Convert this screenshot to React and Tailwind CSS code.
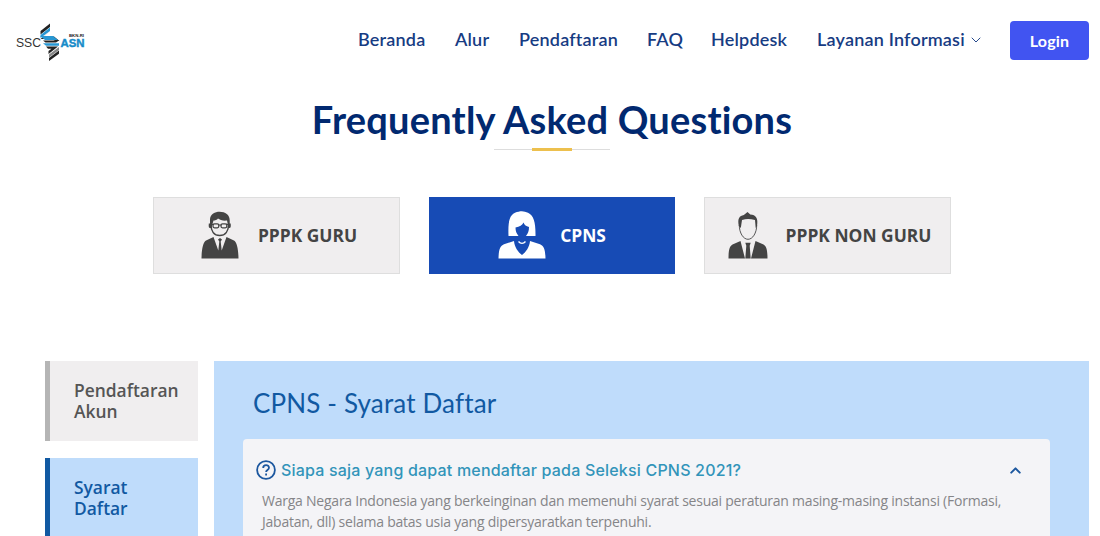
import { ChevronDown, ChevronUp } from 'lucide-react'

const NAV_ITEMS = [
  { label: 'Beranda', className: 'w-[97px]' },
  { label: 'Alur', className: 'w-16' },
  { label: 'Pendaftaran', className: 'w-32' },
  { label: 'FAQ', className: 'w-16' },
  { label: 'Helpdesk', className: 'w-[106px]' },
]

const CATEGORIES = [
  { id: 'guru', label: 'PPPK GURU', icon: TeacherIcon, spacing: 'gap-[19px] pl-[5px]' },
  { id: 'cpns', label: 'CPNS', icon: WomanIcon, spacing: 'gap-[14px]' },
  { id: 'non-guru', label: 'PPPK NON GURU', icon: ManIcon, spacing: 'gap-[18px] pl-[4px]' },
]

function Logo() {
  return (
    <svg width="72" height="42" viewBox="0 0 72 42" aria-label="SSCASN BKN-RI">
      <text x="0" y="26.500" fontSize="12.500" textLength="25" lengthAdjust="spacingAndGlyphs" fill="#333" fontFamily="Liberation Sans, sans-serif">SSC</text>
      <path d="M34 3.500 24.500 11v3.500L34 7z" fill="#222" />
      <path d="M34 7.500 24.500 15v3L34 11z" fill="#2797d3" />
      <path d="M34 11.500 27.500 16.500H38L43.500 21H39l-3-2H24.500z" fill="#222" />
      <path d="M24 16h13l5 4H29z" fill="#2797d3" />
      <path d="M27 20.500h16l-3 2H29.500z" fill="#222" />
      <path d="M27 23.300h16v2.500H30z" fill="#2797d3" />
      <path d="M30 26.600h12L32.500 34v-3l3-2.300H32z" fill="#222" />
      <path d="M43 27v3L33 37.500v-3z" fill="#888" />
      <path d="M43 30.500v3.300L33 41v-3z" fill="#222" />
      <text x="53" y="17.400" fontSize="4.200" textLength="15" lengthAdjust="spacingAndGlyphs" fontWeight="700" fill="#222" fontFamily="Liberation Sans, sans-serif">BKN-RI</text>
      <text x="44.500" y="26.500" fontSize="10.500" textLength="24" lengthAdjust="spacingAndGlyphs" fontWeight="700" fill="#168bc9" stroke="#168bc9" strokeWidth=".4" fontFamily="Liberation Sans, sans-serif">ASN</text>
    </svg>
  )
}

function TeacherIcon() {
  return (
    <svg width="38" height="48" viewBox="0 0 38 48" fill="#444">
      <path d="M9 15V8C9.500 3 14 .8 18.500.8c6 0 10 3 10.200 8.200v6h-1.500L26 9.500c-4 .5-7-.5-9-2-1 1.500-3 2-4.500 2L10.800 15z" />
      <path d="M10 14c0 6 3 10.500 8.700 10.500S27.500 20 27.500 14" fill="none" stroke="#444" strokeWidth="1.500" />
      <path d="M7.800 12.500h2.700v4.500H9c-1.200 0-1.500-1-1.200-4.500zM27 12.500h2.700c.3 3.500 0 4.500-1.200 4.500H27z" />
      <rect x="12" y="12.800" width="5.800" height="4" rx="1.500" fill="none" stroke="#444" strokeWidth="1.300" />
      <rect x="20" y="12.800" width="5.800" height="4" rx="1.500" fill="none" stroke="#444" strokeWidth="1.300" />
      <path d="M9.500 13.300h3M17.500 14h3M25 13.300h3" stroke="#444" strokeWidth="1.200" />
      <path d="M.5 47.500C.7 38 2 31.500 5 29.500L12.500 26l4.800 13.500 1-9-1.300-2 2-1.500 2 1.500-1.300 2 1 9L25.500 26l7.500 3.500c3 2 4.300 8.500 4.500 18z" />
    </svg>
  )
}

function WomanIcon() {
  return (
    <svg width="48" height="48" viewBox="0 0 48 48" fill="#fff">
      <path d="M10.500 25C10 12 11 4.500 17 1.800c5-2 9-2 13 0C36 4.500 37.700 12 37.500 25H28c2-2.500 3-5 3-9-3-.7-4.500-2-5.500-4.500-1 2.500-4 4.500-8 5 0 3.500 1 6 3 8.500z" />
      <path d="M.5 47.500C.8 38 2 35 6 33.200l10-3.200c.5 6 4 11 8 14 4-3 7.500-8 8-14l10 3.200c4 1.800 5.200 4.800 5.500 14.300z" />
      <path d="M20.500 30.500c2 2.500 5 2.500 7 0" fill="none" stroke="#fff" strokeWidth="1.300" />
    </svg>
  )
}

function ManIcon() {
  return (
    <svg width="40" height="48" viewBox="0 0 40 48" fill="#444">
      <path d="M10.800 15c-1.500-8 .7-10 5-11L19.500 1l2.800 2.500c5.500 0 8.200 4 6.700 11.500l-1.300 2-.7-8c-5-1.500-9-1.500-13 0l-1.200 8z" />
      <path d="M11.300 14c0 8 4 14.300 8.700 14.300S28.700 22 28.700 14" fill="none" stroke="#444" strokeWidth=".9" />
      <path d="M.5 47.500c.1-9 1-12 4-14L12.500 30l4.500 17.500zM39.500 47.500c-.1-9-1-12-4-14L27.500 30 23 47.500zM17.300 31.800h5.400l-1 3 1 12.700h-5.400l1-12.700z" />
    </svg>
  )
}

function QuestionIcon() {
  return (
    <svg width="20" height="20" viewBox="0 0 20 20" fill="none" stroke="#1c579f" strokeWidth="1.800">
      <circle cx="10" cy="10" r="8.900" />
      <path d="M7.200 8c0-3.900 5.800-3.700 5.800-.2 0 2.200-2.900 2.300-2.900 4.200M10.100 13.500v1.900" />
    </svg>
  )
}

function Header() {
  return (
    <header className="flex h-20 items-center pt-px pl-4">
      <div className="w-[342px] pt-px">
        <Logo />
      </div>
      <nav className="flex items-center pb-[3px] font-[Lato,sans-serif] text-[18px] font-semibold tracking-[0.2px] text-[#173c83]">
        {NAV_ITEMS.map((item) => (
          <a key={item.label} href="#" className={item.className}>
            {item.label}
          </a>
        ))}
        <a href="#" className="flex w-[193px] items-center gap-[3px] whitespace-nowrap">
          Layanan Informasi
          <ChevronDown size={16} strokeWidth={1.4} className="mt-px" />
        </a>
      </nav>
      <button type="button" className="h-[39px] w-[79px] rounded bg-[#4154f1] font-[Lato,sans-serif] text-[16px] font-bold tracking-[0.2px] text-white">
        Login
      </button>
    </header>
  )
}

function CategoryTabs({ active }) {
  return (
    <div className="mt-[46px] flex justify-center gap-[29px] pl-1">
      {CATEGORIES.map(({ id, label, icon: Icon, spacing }) => (
        <button
          key={id}
          type="button"
          className={`flex h-[77px] w-[246.500px] items-center justify-center border pb-px font-['Open_Sans',sans-serif] text-[17.400px] font-bold whitespace-nowrap ${spacing} ${
            id === active ? 'border-[#174bb5] bg-[#174bb5] text-white' : 'border-[#dedede] bg-[#f0eeef] text-[#444]'
          }`}
        >
          <Icon />
          {label}
        </button>
      ))}
    </div>
  )
}

export default function App() {
  return (
    <div className="h-[536px] w-[1100px] overflow-hidden bg-white">
      <Header />
      <h1 className="mt-[15px] pl-1 text-center font-[Lato,sans-serif] text-[38px] leading-[48px] font-bold tracking-[0.200px] text-[#012970]">
        Frequently Asked Questions
      </h1>
      <div className="mt-[5px] flex h-[3px] items-center justify-center pl-1">
        <span className="h-px w-[38px] bg-[#ddd]" />
        <span className="h-[3px] w-10 bg-[#edc04e]" />
        <span className="h-px w-[38px] bg-[#ddd]" />
      </div>
      <CategoryTabs active="cpns" />

      <main className="mt-[87px] flex gap-4 pl-[45px]">
        <aside className="flex w-[153px] shrink-0 flex-col gap-[17px] font-['Open_Sans',sans-serif] text-[17.400px] leading-[20.500px] font-semibold">
          <a href="#" className="h-20 border-l-[5px] border-[#b5b5b5] bg-[#f0eeef] pt-[19px] pl-6 text-[#555]">
            Pendaftaran<br />Akun
          </a>
          <a href="#" className="h-20 border-l-[5px] border-[#1159a2] bg-[#bfdcfb] pt-[19px] pl-6 text-[#1159a2]">
            Syarat<br />Daftar
          </a>
        </aside>
        <section className="h-[200px] w-[875px] bg-[#bfdcfb] px-[29px] pt-[25px]">
          <h2 className="pl-[10px] font-[Lato,sans-serif] text-[26px] leading-[34px] tracking-[0.150px] text-[#1159a2]">
            CPNS - Syarat Daftar
          </h2>
          <article className="mt-[19px] h-32 w-[807px] rounded bg-[#f4f4f7]">
            <div className="flex items-center pt-[18px] pl-[13px] text-[#1c579f]">
              <QuestionIcon />
              <h3 className="ml-[5px] w-[726px] font-[Inter,sans-serif] text-[16px] leading-[26px] font-medium tracking-[0.190px] text-[#3294ba]">
                Siapa saja yang dapat mendaftar pada Seleksi CPNS 2021?
              </h3>
              <ChevronUp size={17} strokeWidth={2.8} />
            </div>
            <p className="mt-[7px] pl-[19px] font-['Open_Sans',sans-serif] text-[14px] leading-[21px] tracking-[-0.235px] whitespace-nowrap text-[#858588]">
              Warga Negara Indonesia yang berkeinginan dan memenuhi syarat sesuai peraturan masing-masing instansi (Formasi,
              <br />
              Jabatan, dll) selama batas usia yang dipersyaratkan terpenuhi.
            </p>
          </article>
        </section>
      </main>
    </div>
  )
}
